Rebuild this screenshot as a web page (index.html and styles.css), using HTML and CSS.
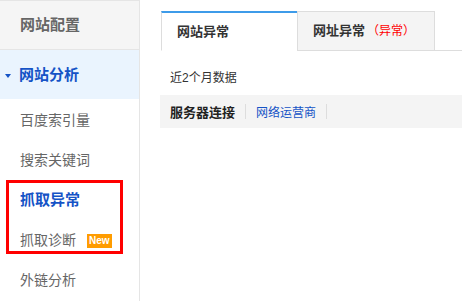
FILE: index.html
```html
<!DOCTYPE html>
<html lang="zh-CN">
<head>
    <meta charset="UTF-8">
    <title>抓取异常</title>
    <link rel="stylesheet" href="styles.css">
</head>
<body>
<div class="page">
    <!-- sidebar -->
    <div class="sidebar">
        <div class="nav-group">网站配置</div>
        <div class="nav-group open"><span class="arrow"></span>网站分析</div>
        <div class="nav-item">百度索引量</div>
        <div class="nav-item">搜索关键词</div>
        <div class="nav-item active">抓取异常</div>
        <div class="nav-item">抓取诊断<span class="badge">New</span></div>
        <div class="nav-item">外链分析</div>
        <div class="highlight"></div>
    </div>

    <!-- main -->
    <div class="main">
        <div class="tabs">
            <div class="tab current">网站异常</div>
            <div class="tab">网址异常<span class="warn">（异常）</span></div>
        </div>
        <p class="period">近2个月数据</p>
        <div class="filter-bar">
            <span class="filter selected">服务器连接</span>
            <span class="sep"></span>
            <span class="filter">网络运营商</span>
            <span class="sep"></span>
        </div>
    </div>
</div>
</body>
</html>
```

FILE: styles.css
```css
body {
    margin: 0;
    font-family: "Liberation Sans", "Noto Sans CJK SC", sans-serif;
    background: #fff;
}
.page {
    display: flex;
    min-height: 301px;
}
.sidebar {
    position: relative;
    width: 139px;
    border-right: 1px solid #e5e5e5;
}
.nav-group {
    height: 48px;
    line-height: 48px;
    padding-left: 20px;
    font-size: 15px;
    font-weight: bold;
    color: #666;
    background-color: #f5f5f5;
    border-top: 1px solid #e5e5e5;
    border-bottom: 1px solid #e5e5e5;
}
.nav-group.open {
    height: 49px;
    line-height: 49px;
    border-top: 0;
    border-bottom: 1px solid #fff;
    background-color: #eaf4fe;
    color: #1553c6;
}
.arrow {
    display: inline-block;
    vertical-align: middle;
    margin: 0 8px 0 -15px;
    border-left: 3.5px solid transparent;
    border-right: 3.5px solid transparent;
    border-top: 4px solid #1553c6;
}
.nav-item {
    height: 40px;
    line-height: 40px;
    padding-left: 20px;
    font-size: 14px;
    color: #666;
}
.nav-item.active {
    font-size: 15px;
    font-weight: bold;
    color: #1553c6;
}
.badge {
    display: inline-block;
    margin-left: 11px;
    padding: 0 2px;
    height: 14px;
    line-height: 14px;
    font-size: 10px;
    font-weight: bold;
    color: #fff;
    background-color: #ff9c00;
    vertical-align: 1px;
}
/* red annotation frame */
.highlight {
    position: absolute;
    left: 6px;
    top: 180px;
    width: 117px;
    height: 74px;
    border: 3px solid #f00;
    box-sizing: border-box;
}
.main {
    flex: 1;
    padding: 11px 0 0 20px;
}
.tabs {
    display: flex;
    margin-left: 1px;
    border-bottom: 1px solid #ddd;
}
.tab {
    width: 121px;
    height: 38px;
    line-height: 38px;
    padding-left: 15px;
    font-size: 13px;
    font-weight: bold;
    color: #333;
    background-color: #f4f4f4;
    border: 1px solid #ddd;
    border-bottom: 0;
}
.tab.current {
    width: 120px;
    height: 37px;
    line-height: 37px;
    background-color: #fff;
    border-top: 2px solid #3d9be9;
    border-right: 0;
    border-bottom: 1px solid #fff;
    margin-bottom: -1px;
}
.warn {
    margin-left: 2px;
    font-size: 12px;
    font-weight: normal;
    color: #f00;
}
.period {
    margin: 17px 0 7px;
    padding-left: 10px;
    line-height: 20px;
    font-size: 12px;
    color: #333;
}
.filter-bar {
    display: flex;
    align-items: center;
    height: 33px;
    padding-left: 10px;
    background-color: #f4f4f4;
}
.filter {
    font-size: 12px;
    color: #1553c6;
}
.filter.selected {
    font-size: 13px;
    font-weight: bold;
    color: #222;
}
.sep {
    width: 1px;
    height: 15px;
    margin: 0 10px;
    background-color: #ddd;
}
```
